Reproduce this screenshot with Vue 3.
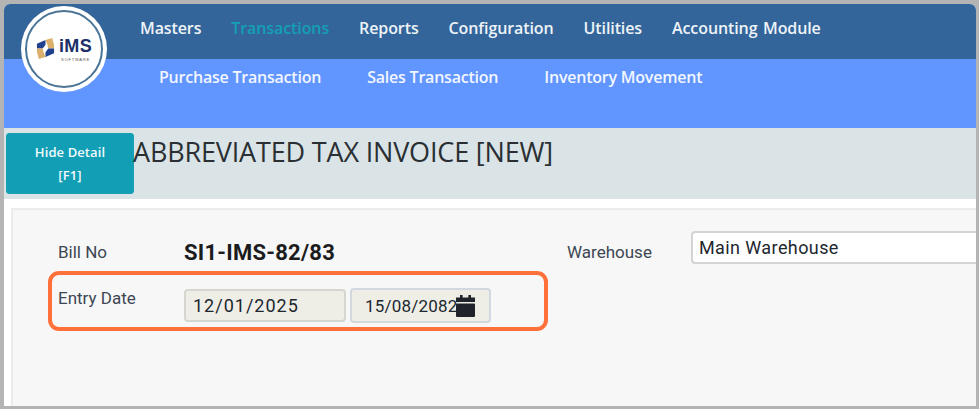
<script setup>
const mainNav = [
  { label: 'Masters' },
  { label: 'Transactions', active: true },
  { label: 'Reports' },
  { label: 'Configuration' },
  { label: 'Utilities' },
  { label: 'Accounting Module' }
]
const subNav = ['Purchase Transaction', 'Sales Transaction', 'Inventory Movement']
</script>

<template>
  <div class="frame">
    <div class="window">
      <div class="logo">
        <div class="ring">
          <svg class="mark" viewBox="0 0 20 22" width="19" height="21">
            <polygon points="10,2 10,7 7,11 1,11 1,6" fill="#1f3f8f" />
            <polygon points="10,2 17,0 19,7 19,11 13,11 12,7" fill="#dcb06c" />
            <polygon points="10,20 3,22 1,15 1,11 7,11 8,15" fill="#dcb06c" />
            <polygon points="10,20 10,15 13,11 19,11 19,16" fill="#1f3f8f" />
          </svg>
          <div class="brand">
            <span class="ims">iMS</span>
            <span class="soft">SOFTWARE</span>
          </div>
        </div>
      </div>

      <nav class="main-nav">
        <a v-for="item in mainNav" :key="item.label" :class="{ active: item.active }">{{ item.label }}</a>
      </nav>
      <nav class="sub-nav">
        <a v-for="item in subNav" :key="item">{{ item }}</a>
      </nav>

      <div class="title-bar">
        <button class="hide-btn">Hide Detail<br />[F1]</button>
        <h1>ABBREVIATED TAX INVOICE [NEW]</h1>
      </div>

      <div class="content">
        <section class="panel">
          <div class="left">
            <div class="bill-row">
              <span class="label">Bill No</span>
              <strong>SI1-IMS-82/83</strong>
            </div>
            <div class="entry-row">
              <span class="label entry-label">Entry Date</span>
              <div class="date ad">12/01/2025</div>
              <div class="date bs">
                15/08/2082
                <svg class="cal" viewBox="0 0 19 22" width="19" height="22">
                  <rect x="4" y="0" width="2.6" height="4" fill="#20232a" />
                  <rect x="12.4" y="0" width="2.6" height="4" fill="#20232a" />
                  <rect x="0" y="2.5" width="19" height="4.5" fill="#20232a" />
                  <rect x="0" y="8.4" width="19" height="13.6" rx="1" fill="#20232a" />
                </svg>
              </div>
            </div>
          </div>
          <div class="right">
            <span class="label wh-label">Warehouse</span>
            <div class="select">Main Warehouse</div>
          </div>
        </section>
      </div>
    </div>
  </div>
</template>

<style>
html, body { margin: 0; background: #b4b4b4; }
</style>

<style scoped>
.frame {
  width: 979px;
  height: 409px;
  box-sizing: border-box;
  padding: 4px 3px 3px 4px;
  background: #b4b4b4;
  overflow: hidden;
}
.window {
  position: relative;
  height: 402px;
  border-radius: 6px 6px 0 0;
  overflow: hidden;
  background: #fff;
  display: flex;
  flex-direction: column;
  font-family: "Open Sans", sans-serif;
}
.logo {
  position: absolute;
  left: 17px;
  top: 2px;
  width: 86px;
  height: 86px;
  border-radius: 50%;
  background: #fff;
  box-sizing: border-box;
  padding: 4px;
  z-index: 2;
}
.ring {
  width: 100%;
  height: 100%;
  box-sizing: border-box;
  border: 2px solid #4b7597;
  border-radius: 50%;
  display: flex;
  align-items: center;
  justify-content: center;
  gap: 4px;
  padding-bottom: 1px;
}
.mark { flex: none; }
.brand { display: flex; flex-direction: column; align-items: center; }
.ims {
  font-family: "Liberation Sans", sans-serif;
  font-size: 18px;
  line-height: 21px;
  font-weight: 700;
  color: #1c2f66;
  letter-spacing: 0.4px;
}
.soft {
  font-family: "Liberation Sans", sans-serif;
  font-size: 4px;
  line-height: 5px;
  letter-spacing: 0.8px;
  color: #555;
}
.main-nav {
  height: 55px;
  flex: none;
  box-sizing: border-box;
  background: #33659a;
  padding: 13px 0 0 136px;
  display: flex;
  gap: 30px;
}
.main-nav a {
  color: #eef3f8;
  font-size: 16px;
  line-height: 22px;
  font-weight: 600;
  letter-spacing: -0.1px;
  word-spacing: 1.5px;
}
.main-nav a.active { color: #14a0b4; }
.sub-nav {
  height: 69px;
  flex: none;
  box-sizing: border-box;
  background: #6195ff;
  padding: 7px 0 0 155px;
  display: flex;
  gap: 46px;
}
.sub-nav a {
  color: #f2f6ff;
  font-size: 16px;
  line-height: 22px;
  font-weight: 600;
  letter-spacing: -0.22px;
}
.title-bar {
  height: 71px;
  flex: none;
  box-sizing: border-box;
  background: #dae4e6;
  padding: 5px 0 0 2px;
  display: flex;
  align-items: flex-start;
}
.hide-btn {
  width: 128px;
  height: 61px;
  box-sizing: border-box;
  border: 1px solid #1a9fb3;
  border-radius: 3px;
  background: #129fb5;
  color: #f1fafc;
  font-family: "Open Sans", sans-serif;
  font-size: 13px;
  font-weight: 600;
  line-height: 23px;
  letter-spacing: 0.1px;
  padding: 0;
}
h1 {
  margin: 0 0 0 -1px;
  font-size: 27px;
  font-weight: 400;
  line-height: 38px;
  color: #2a2f33;
  letter-spacing: -0.17px;
}
.content {
  flex: 1;
  background: #fff;
  padding: 9px 0 0 7px;
  min-height: 0;
}
.panel {
  height: 100%;
  box-sizing: border-box;
  background: #f7f7f7;
  border: 2px solid #ececec;
  border-right: 0;
  border-bottom: 0;
  display: flex;
}
.left {
  width: 536px;
  flex: none;
  padding: 24px 0 0 35px;
  box-sizing: border-box;
}
.label {
  font-family: Roboto, sans-serif;
  font-size: 17px;
  line-height: 20px;
  color: #3d4653;
}
.bill-row {
  display: flex;
  align-items: center;
  height: 36px;
  padding-left: 10px;
}
.bill-row .label { width: 126px; flex: none; }
.bill-row strong {
  font-family: Roboto, sans-serif;
  font-size: 22px;
  font-weight: 700;
  letter-spacing: 0.25px;
  color: #1c1c1e;
}
.entry-row {
  margin-top: 1px;
  width: 500px;
  height: 60px;
  box-sizing: border-box;
  border: 4px solid #ff703a;
  border-radius: 11px;
  display: flex;
  align-items: flex-start;
  padding: 14px 0 0 6px;
}
.entry-label { width: 126px; flex: none; margin-top: -1px; }
.date {
  box-sizing: border-box;
  background: #efeee6;
  font-family: Roboto, sans-serif;
  color: #20262e;
  display: flex;
  align-items: center;
  border-radius: 4px;
}
.ad {
  width: 162px;
  height: 33px;
  border: 2px solid #d5d6d0;
  padding-left: 7px;
  font-size: 18px;
  letter-spacing: 1px;
}
.bs {
  position: relative;
  width: 141px;
  height: 35px;
  margin: -1px 0 0 4px;
  border: 2px solid #d3d8e0;
  padding-left: 13px;
  font-size: 17px;
  letter-spacing: 0.2px;
}
.cal {
  position: absolute;
  left: 104px;
  top: 5px;
}
.right {
  flex: 1;
  display: flex;
  align-items: flex-start;
  padding: 21px 0 0 18px;
  min-width: 0;
}
.wh-label {
  width: 124px;
  flex: none;
  margin-top: 11px;
}
.select {
  flex: 1;
  height: 33px;
  box-sizing: border-box;
  border: 2px solid #d4d4d4;
  border-right: 0;
  border-radius: 4px 0 0 4px;
  background: #fff;
  font-family: Roboto, sans-serif;
  font-size: 18px;
  line-height: 29px;
  color: #22272e;
  padding-left: 6px;
  letter-spacing: 0.4px;
}
</style>
